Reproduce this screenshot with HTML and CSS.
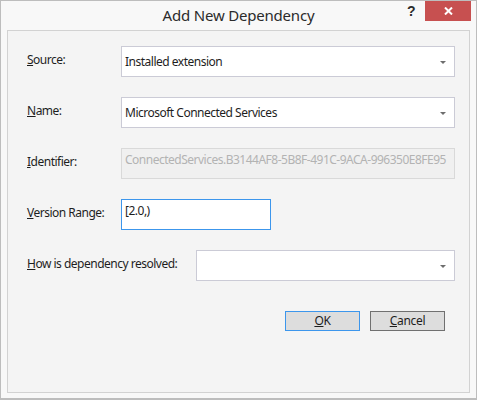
FILE: index.html
```html
<!DOCTYPE html>
<html>
<head>
<meta charset="utf-8">
<link rel="stylesheet" href="styles.css">
</head>
<body>
<div class="window">
  <div class="titlebar">
    <div class="title">Add New Dependency</div>
    <div class="help">?</div>
    <div class="close">
      <svg width="9" height="8" viewBox="0 0 9 8"><path d="M1 0.5 L8 7.5 M8 0.5 L1 7.5" stroke="#fff" stroke-width="2"/></svg>
    </div>
  </div>
  <div class="panel">
    <div class="row">
      <label class="label"><u>S</u>ource:</label>
      <div class="field combo"><span class="value">Installed extension</span><span class="arrow"></span></div>
    </div>
    <div class="row">
      <label class="label"><u>N</u>ame:</label>
      <div class="field combo"><span class="value">Microsoft Connected Services</span><span class="arrow"></span></div>
    </div>
    <div class="row">
      <label class="label"><u>I</u>dentifier:</label>
      <div class="field textbox disabled"><span class="value">ConnectedServices.B3144AF8-5B8F-491C-9ACA-996350E8FE95</span></div>
    </div>
    <div class="row">
      <label class="label"><u>V</u>ersion Range:</label>
      <div class="field textbox focused short"><span class="value">[2.0,)</span></div>
    </div>
    <div class="row">
      <label class="label auto"><u>H</u>ow is dependency resolved:</label>
      <div class="field combo"><span class="value"></span><span class="arrow"></span></div>
    </div>
    <div class="buttons">
      <button class="btn default"><u>O</u>K</button>
      <button class="btn"><u>C</u>ancel</button>
    </div>
  </div>
</div>
</body>
</html>
```
FILE: styles.css
```css
html, body {
  margin: 0;
  padding: 0;
  background: #f8f8f8;
}
body {
  font-family: "Noto Sans", "Open Sans", sans-serif;
  font-size: 12px;
  letter-spacing: -0.5px;
  color: #1e1e1e;
}
.window {
  width: 477px;
  height: 400px;
  box-sizing: border-box;
  border: 1px solid #bdbdbd;
  border-bottom-width: 2px;
  background: #f8f8f8;
  display: flex;
  flex-direction: column;
}
.titlebar {
  height: 29px;
  position: relative;
  display: flex;
  align-items: center;
  justify-content: center;
}
.title {
  font-family: "Noto Sans", sans-serif;
  font-size: 15px;
  color: #2b2b2b;
  margin-top: -1px;
  letter-spacing: -0.2px;
}
.help {
  position: absolute;
  left: 406px;
  top: 2px;
  font-family: "Liberation Sans", sans-serif;
  font-weight: bold;
  font-size: 14px;
  letter-spacing: 0;
  color: #2b2b2b;
}
.close {
  position: absolute;
  left: 424px;
  top: 0;
  width: 46px;
  height: 20px;
  background: #c75050;
  display: flex;
  align-items: center;
  justify-content: center;
}
.close svg { display: block; }
.panel {
  flex: 1;
  margin: 0 6px 5px 6px;
  border: 1px solid #d2d2d2;
  background: #f4f4f4;
  padding: 15px 14px 0 19px;
  display: flex;
  flex-direction: column;
  gap: 20px;
}
.row {
  display: flex;
  align-items: center;
  height: 31px;
}
.label {
  width: 94px;
  flex: none;
  margin-top: -4px;
}
.label.auto {
  width: auto;
  margin-right: 19px;
}
.field {
  box-sizing: border-box;
  height: 31px;
  flex: 1;
  min-width: 0;
  background: #fff;
  border: 1px solid #cbcbd6;
  display: flex;
  align-items: center;
  padding: 0 8px 0 3px;
  overflow: hidden;
  white-space: nowrap;
}
.field.combo .value {
  flex: 1;
}
.arrow {
  width: 0;
  height: 0;
  border-left: 3px solid transparent;
  border-right: 3px solid transparent;
  border-top: 3px solid #6d6d6d;
  margin-top: 2px;
}
.field.textbox {
  align-items: flex-start;
  padding-top: 2px;
}
.field.disabled {
  background: #f0f0f0;
  border-color: #d9d9d9;
  color: #b3b3b3;
}
.field.focused {
  border-color: #3c96ec;
}
.field.short {
  flex: none;
  width: 150px;
}
.buttons {
  display: flex;
  justify-content: flex-end;
  gap: 10px;
  margin-top: 10px;
  padding-right: 10px;
}
.btn {
  width: 75px;
  height: 20px;
  box-sizing: border-box;
  border: 1px solid #707070;
  background: #dddddd;
  font-family: "Noto Sans", sans-serif;
  font-size: 12px;
  letter-spacing: -0.3px;
  color: #1e1e1e;
  padding: 0;
  line-height: 16px;
}
.btn.default {
  border-color: #3c96ec;
}
```
